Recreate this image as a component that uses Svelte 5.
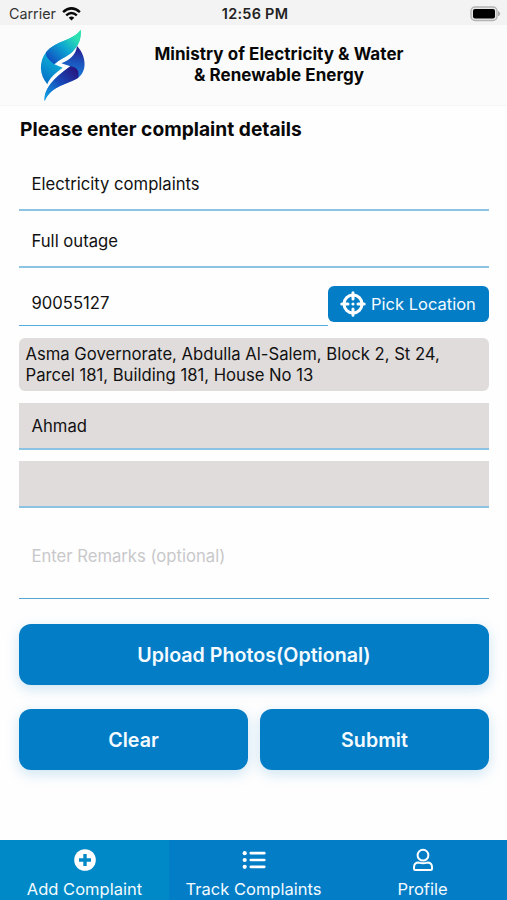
<script>
  const tabs = [
    { id: 'add', label: 'Add Complaint' },
    { id: 'track', label: 'Track Complaints' },
    { id: 'profile', label: 'Profile' }
  ];
  let active = $state('add');
  let remarks = $state('');
</script>

<div class="screen">
  <div class="status">
    <div class="carrier">
      <span>Carrier</span>
      <svg width="19" height="14" viewBox="0 0 19 14" fill="none" stroke="#080808" stroke-width="2.5">
        <path d="M1.1 5.1Q9.5-2.4 17.9 5.1" />
        <path d="M4.2 8.4Q9.5 3.7 14.8 8.4" />
        <path d="M6.7 10.7Q9.5 8.2 12.3 10.7L9.5 13.5Z" fill="#080808" stroke="none" />
      </svg>
    </div>
    <div class="time">12:56 PM</div>
    <div class="battery">
      <svg width="31" height="16" viewBox="0 0 31 16">
        <rect x="1" y="1" width="26" height="13.5" rx="4" fill="#e6e6e6" stroke="#b4b4b4" stroke-width="1.4" />
        <rect x="3" y="3" width="22" height="9.5" rx="2" fill="#000" />
        <path d="M28.5 5.5Q31 7.7 28.5 10Z" fill="#adadad" stroke="#adadad" />
      </svg>
    </div>
  </div>

  <header>
    <svg class="logo" viewBox="114 84 147 225">
      <defs>
        <linearGradient id="leaf" x1="235" y1="100" x2="135" y2="240" gradientUnits="userSpaceOnUse">
          <stop offset="0" stop-color="#2ce0b2" />
          <stop offset=".35" stop-color="#12a9cf" />
          <stop offset=".65" stop-color="#0ba6d5" />
          <stop offset="1" stop-color="#0875c8" />
        </linearGradient>
        <linearGradient id="fold" x1="230" y1="115" x2="155" y2="190" gradientUnits="userSpaceOnUse">
          <stop offset="0" stop-color="#2ce0b2" />
          <stop offset=".45" stop-color="#0da3d2" />
          <stop offset="1" stop-color="#104cc0" />
        </linearGradient>
        <linearGradient id="wing" x1="235" y1="140" x2="220" y2="235" gradientUnits="userSpaceOnUse">
          <stop offset="0" stop-color="#28188c" />
          <stop offset=".5" stop-color="#1b55bd" />
          <stop offset="1" stop-color="#187ddb" />
        </linearGradient>
        <linearGradient id="tail" x1="225" y1="205" x2="135" y2="295" gradientUnits="userSpaceOnUse">
          <stop offset="0" stop-color="#28157f" />
          <stop offset=".5" stop-color="#174bba" />
          <stop offset="1" stop-color="#10a5e5" />
        </linearGradient>
      </defs>
      <path fill="url(#leaf)" d="M242 89C219 123 168 120 138 157C116 186 118 225 142 253C148 234 166 219 188 203L163 193C176 178 203 171 220 152C238 133 244 113 242 89Z" />
      <path fill="url(#fold)" d="M242 89C219 123 168 120 138 157C136 170 147 181 163 193C176 178 203 171 220 152C238 133 244 113 242 89Z" />
      <path fill="url(#wing)" d="M231 138C259 167 263 214 232 235C204 253 154 256 134 303C130 271 157 237 211 199L184 190C209 180 228 165 231 138Z" />
      <path fill="url(#tail)" d="M211 199C232 202 238 213 235 233C204 253 154 256 134 303C130 271 157 237 211 199Z" />
    </svg>
    <h1>Ministry of Electricity &amp; Water<br />&amp; Renewable Energy</h1>
  </header>

  <main>
    <h2>Please enter complaint details</h2>
    <div class="field type">Electricity complaints</div>
    <div class="field outage">Full outage</div>
    <div class="phone-row">
      <div class="field phone">90055127</div>
      <button class="pick">
        <svg width="26" height="26" viewBox="0 0 26 26" fill="none" stroke="#fff">
          <circle cx="13" cy="13" r="9" stroke-width="3" />
          <path d="M13 1.8V8M13 18V24.2M1.8 13H8M18 13H24.2" stroke-width="3" stroke-linecap="round" />
          <circle cx="13" cy="13" r="1.6" fill="#fff" stroke="none" />
        </svg>
        <span>Pick Location</span>
      </button>
    </div>
    <div class="address">Asma Governorate, Abdulla Al-Salem, Block 2, St 24,<br />Parcel 181, Building 181, House No 13</div>
    <div class="field filled name">Ahmad</div>
    <div class="field filled blank"></div>
    <input class="remarks" placeholder="Enter Remarks (optional)" bind:value={remarks} />
    <button class="action upload">Upload Photos(Optional)</button>
    <div class="actions">
      <button class="action">Clear</button>
      <button class="action">Submit</button>
    </div>
  </main>

  <nav>
    {#each tabs as tab (tab.id)}
      <button class:active={active === tab.id} onclick={() => (active = tab.id)}>
        <svg width="24" height="24" viewBox="0 0 24 24" fill="none" stroke="#fff">
          {#if tab.id === 'add'}
            <circle cx="12" cy="12" r="10.8" fill="#fff" stroke="none" />
            <path d="M12 6V18M6 12H18" stroke="#0089c7" stroke-width="3.4" />
          {:else if tab.id === 'track'}
            <path d="M8.8 5.2H22.3M8.8 12H22.3M8.8 18.8H22.3" stroke-width="2.7" stroke-linecap="round" />
            <g fill="#fff" stroke="none"><circle cx="2.7" cy="5.2" r="2.1" /><circle cx="2.7" cy="12" r="2.1" /><circle cx="2.7" cy="18.8" r="2.1" /></g>
          {:else}
            <circle cx="12" cy="7.2" r="5.4" stroke-width="2" />
            <path d="M7.8 14.6C4.6 14.6 3 16.6 3 19.3V20.8Q3 22 4.2 22H19.8Q21 22 21 20.8V19.3C21 16.6 19.4 14.6 16.2 14.6Q12 16 7.8 14.6Z" stroke-width="2" />
          {/if}
        </svg>
        <span>{tab.label}</span>
      </button>
    {/each}
  </nav>
</div>

<style>
  :global(body) { background: #fff; }
  * { box-sizing: border-box; }
  .screen {
    width: 507px; height: 900px; display: flex; flex-direction: column;
    overflow: hidden; background: #fefefe; color: #111;
    font-family: Inter, "Liberation Sans", sans-serif; font-size: 16.65px;
  }
  svg { display: block; flex: none; }
  button { border: 0; margin: 0; padding: 0; color: #f4fbff; font: inherit; background: #047dc7; }
  .status {
    height: 25px; flex: none; background: #f3f3f3; padding: 2px 6px 0 9px;
    display: grid; grid-template-columns: 1fr auto 1fr; align-items: center;
  }
  .carrier { display: flex; align-items: center; gap: 6px; font-size: 14.3px; color: #333; }
  .time { font-size: 14.4px; font-weight: 600; letter-spacing: .3px; color: #222; }
  .battery { display: flex; justify-content: flex-end; }
  header { height: 81px; flex: none; background: #fbfbfb; border-bottom: 1px solid #f5f5f5; display: flex; padding: 3px 0 0 38px; }
  .logo { width: 49px; height: 75px; }
  h1 { margin: 16px 0 0 66px; width: 252px; font-size: 17px; letter-spacing: .05px; font-weight: 700; line-height: 21px; text-align: center; color: #080808; white-space: nowrap; }
  main { flex: 1; min-height: 0; padding: 10px 18px 0 19px; display: flex; flex-direction: column; }
  h2 { margin: 0 0 0 1px; font-size: 19.2px; font-weight: 700; line-height: 26px; height: 26px; color: #080808; white-space: nowrap; }
  .field { padding-left: 12.5px; border-bottom: 2px solid #8dc3e2; display: flex; align-items: center; flex: none; }
  .type { height: 50px; margin-top: 19px; padding-bottom: 2px; }
  .outage { height: 52px; margin-top: 5px; }
  .phone-row { display: flex; margin-top: 18px; height: 40px; flex: none; }
  .phone { flex: 1; height: 40px; padding-bottom: 6px; border-bottom: 1px solid #55addb; }
  .pick { width: 161px; height: 36px; border-radius: 6px; display: flex; align-items: center; gap: 5.5px; padding-left: 11.5px; white-space: nowrap; font-size: 16.5px; }
  .address { height: 53px; flex: none; margin-top: 12px; border-radius: 6px; background: #e0dcdb; padding: 6px 6.5px; line-height: 21px; white-space: nowrap; }
  .filled { background: #e0dcdb; height: 47px; }
  .name { margin-top: 12px; }
  .blank { margin-top: 11px; }
  .remarks { flex: none; width: 100%; height: 55px; margin-top: 36px; padding: 0 0 31px 12.5px; border: 0; border-bottom: 1px solid #55a5d0; background: transparent; outline: 0; font: inherit; color: #111; border-radius: 0; }
  .remarks::placeholder { color: #c8c8ca; opacity: 1; }
  .action { height: 61px; border-radius: 12px; font-size: 19.65px; font-weight: 600; box-shadow: 0 4px 14px rgba(4, 125, 199, .2); }
  .upload { margin-top: 25px; flex: none; }
  .actions { display: grid; grid-template-columns: 1fr 1fr; gap: 12px; margin-top: 24px; }
  nav { height: 60px; flex: none; display: grid; grid-template-columns: repeat(3, 1fr); background: #047dc7; }
  nav button { display: flex; flex-direction: column; align-items: center; padding: 8px 0 0; gap: 6px; white-space: nowrap; line-height: 22px; font-size: 16.55px; }
  nav .active { background: #0089c7; }
</style>
